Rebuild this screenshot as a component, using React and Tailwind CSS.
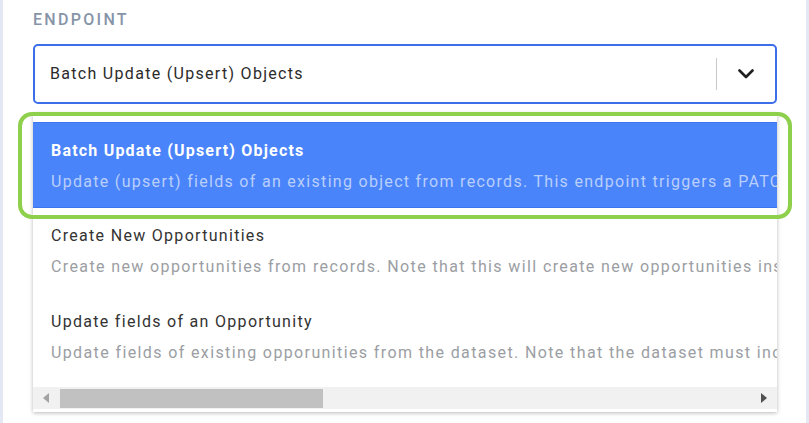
import React from 'react';

const options = [
  {
    title: 'Batch Update (Upsert) Objects',
    description:
      'Update (upsert) fields of an existing object from records. This endpoint triggers a PATCH request for each record.',
    selected: true,
  },
  {
    title: 'Create New Opportunities',
    description:
      'Create new opportunities from records. Note that this will create new opportunities instead of updating.',
  },
  {
    title: 'Update fields of an Opportunity',
    description:
      'Update fields of existing opporunities from the dataset. Note that the dataset must include the id.',
  },
];

const OptionRow = ({ option }) => (
  <div
    className={
      option.selected
        ? 'h-[86px] pl-[18px] pt-[17px] bg-[#4a84fa] border-y border-[#3d74ef] whitespace-nowrap'
        : 'h-[86px] pl-[18px] pt-[17px] whitespace-nowrap'
    }
  >
    <div
      className={
        option.selected
          ? 'text-[16px] leading-[22px] font-bold text-white tracking-[1.2px]'
          : 'text-[16px] leading-[22px] text-[#333] tracking-[1.3px]'
      }
    >
      {option.title}
    </div>
    <div
      className={
        option.selected
          ? 'mt-[9px] text-[16px] leading-[22px] text-[#b9cffc] tracking-[1.3px]'
          : 'mt-[9px] text-[16px] leading-[22px] text-[#9b9ea3] tracking-[1.38px]'
      }
    >
      {option.description}
    </div>
  </div>
);

const App = () => {
  return (
    <div className="relative h-[423px] w-[809px] overflow-hidden bg-white border-x-[3px] border-[#e4e8f4] font-['Roboto',sans-serif]">
      <div className="pl-[30px] pt-[10px] w-[774px]">
        {/* Label */}
        <div className="h-[20px] text-[16px] leading-[20px] font-medium tracking-[2.3px] text-[#8794a8]">
          ENDPOINT
        </div>

        {/* Select */}
        <div className="mt-[14px] h-[60px] w-[744px] rounded-[5px] border-2 border-[#3b6ee8] flex items-center">
          <div className="flex-1 pl-[15px] text-[16px] text-[#2b2b2b] tracking-[1.3px]">
            Batch Update (Upsert) Objects
          </div>
          <div className="h-[32px] w-px bg-[#c8c8c8]" />
          <div className="w-[58px] flex items-center justify-center">
            <svg width="16" height="10" viewBox="0 0 16 10" fill="none">
              <path
                d="M1.5 1.5 L8 8 L14.5 1.5"
                stroke="#1f1f1f"
                strokeWidth="2.6"
                strokeLinecap="round"
                strokeLinejoin="round"
              />
            </svg>
          </div>
        </div>

        {/* Menu */}
        <div className="mt-[9px] h-[299px] w-[744px] bg-white shadow-[0_1px_4px_rgba(0,0,0,0.28)] flex flex-col">
          <div className="pt-[9px] overflow-hidden">
            {options.map((option) => (
              <OptionRow key={option.title} option={option} />
            ))}
          </div>
          <div className="mt-[7px] h-[22px] bg-[#f1f1f1] flex items-center">
            <div className="w-[27px] flex items-center justify-center">
              <svg width="7" height="10" viewBox="0 0 7 10">
                <path d="M6 0 L0 5 L6 10 Z" fill="#a3a3a3" />
              </svg>
            </div>
            <div className="h-[19px] w-[263px] bg-[#c1c1c1]" />
            <div className="flex-1" />
            <div className="w-[27px] flex items-center justify-center">
              <svg width="7" height="10" viewBox="0 0 7 10">
                <path d="M1 0 L7 5 L1 10 Z" fill="#505050" />
              </svg>
            </div>
          </div>
        </div>
      </div>

      {/* Highlight annotation */}
      <div className="absolute left-[15px] top-[112px] h-[107px] w-[774px] rounded-[14px] border-4 border-[#8ecf4c] pointer-events-none" />
    </div>
  );
};

export default App;
